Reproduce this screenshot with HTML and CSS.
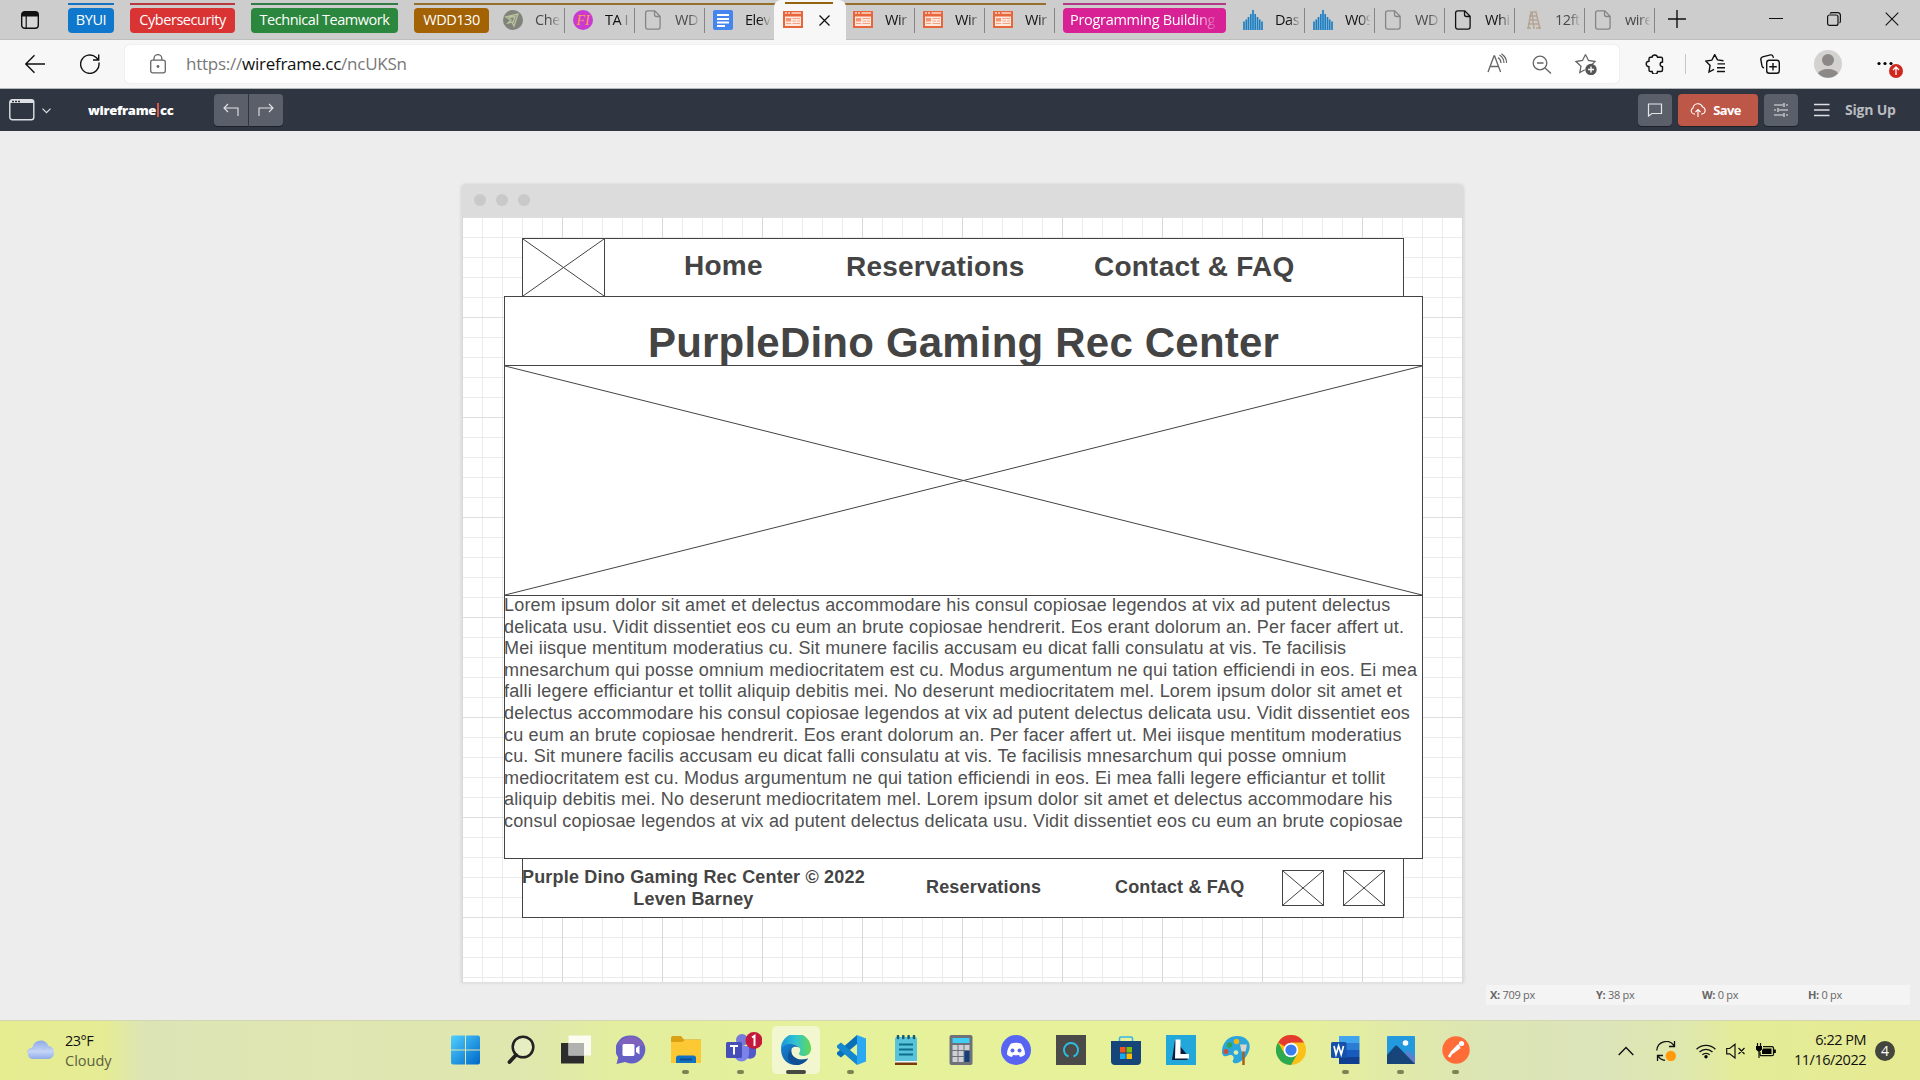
FILE: index.html
```html
<!DOCTYPE html>
<html lang="en">
<head>
<meta charset="utf-8">
<title>wireframe.cc</title>
<link rel="stylesheet" href="styles.css">
</head>
<body>
<svg class="defs" width="0" height="0">
  <symbol id="i-page" viewBox="0 0 20 20"><path d="M4.6 .9h7.2l5.3 5.3v10.900a2 2 0 0 1-2 2H4.600a2 2 0 0 1-2-2V2.900a2 2 0 0 1 2-2zM11.500 1v3.500a2 2 0 0 0 2 2H17" fill="none" stroke="currentColor" stroke-width="1.300"/></symbol>
  <symbol id="i-wire" viewBox="0 0 20 20"><path d="M0 1h20v17H0z" fill="#e8663c"/><path d="M2 6.500h16V16H2z" fill="#ffe9df"/><path d="M2 3h2M5 3h2M8.500 3H18" stroke="#ffd9ca" stroke-width="1.500"/><path d="M3 8h5v3.500H3z" fill="#f59573"/><path d="M9.500 8.500H17M9.500 11H13M14 11h3M3 13.500h5M9.500 13.500H17" stroke="#f2a386" stroke-width="1.200"/></symbol>
  <symbol id="i-bars" viewBox="0 0 20 20"><path d="M1 20v-8.500M3.300 20v-10.500M5.500 20V7M7.800 20V4M10 20V0M12.200 20V4M14.500 20V7M16.700 20V9.500M19 20v-8.500" stroke="#1b7fc4" stroke-width="1.700"/></symbol>
</svg>

<div class="tabstrip">
  <svg class="tab-menu" viewBox="0 0 18 18"><rect x=".7" y=".7" width="16.600" height="16.600" rx="3" fill="#d8d8d8" stroke="#111" stroke-width="1.400"/><path d="M1 1h16v4.500H1z" fill="#111"/><path d="M5.200 5v12" stroke="#111" stroke-width="1.200"/></svg>
  <div class="group blue"><span class="chip">BYUI</span></div>
  <div class="group red"><span class="chip">Cybersecurity</span></div>
  <div class="group green"><span class="chip">Technical Teamwork</span></div>
  <div class="group brown">
    <span class="chip">WDD130</span>
    <div class="tab dim"><svg class="fav" viewBox="0 0 20 20"><circle cx="10" cy="10" r="10" fill="#7f837c"/><path d="M3 7l12-3-4 12-2-4-4 1 3-3zM6 7.500l6-1-2 6" fill="none" stroke="#bac29c" stroke-width="1.300"/></svg><span>Che</span></div>
    <div class="tab"><svg class="fav" viewBox="0 0 20 20"><circle cx="10" cy="10" r="10" fill="#c93ad2"/><text x="10" y="15" class="fi" text-anchor="middle">FI</text></svg><span>TA I</span></div>
    <div class="tab dim"><svg class="fav"><use href="#i-page"/></svg><span>WD</span></div>
    <div class="tab noline"><svg class="fav" viewBox="0 0 20 20"><rect width="20" height="20" rx="2" fill="#4485ee"/><path d="M4 5h12M4 9h12M4 12.500h12M4 16h8" stroke="#fff" stroke-width="2"/></svg><span>Elev</span></div>
    <div class="tab active"><svg class="fav"><use href="#i-wire"/></svg><svg class="close" viewBox="0 0 11 11"><path d="M.5.5l10 10M10.500.5l-10 10" stroke="#111" stroke-width="1.300"/></svg></div>
    <div class="tab"><svg class="fav"><use href="#i-wire"/></svg><span>Wir</span></div>
    <div class="tab"><svg class="fav"><use href="#i-wire"/></svg><span>Wir</span></div>
    <div class="tab"><svg class="fav"><use href="#i-wire"/></svg><span>Wir</span></div>
  </div>
  <div class="group pink"><span class="chip"><span class="chip-fade">Programming Building</span></span></div>
  <div class="tabs">
    <div class="tab"><svg class="fav"><use href="#i-bars"/></svg><span>Das</span></div>
    <div class="tab"><svg class="fav"><use href="#i-bars"/></svg><span>W09</span></div>
    <div class="tab dim"><svg class="fav"><use href="#i-page"/></svg><span>WD</span></div>
    <div class="tab"><svg class="fav"><use href="#i-page"/></svg><span>Whi</span></div>
    <div class="tab dim"><svg class="fav" viewBox="0 0 20 20"><path d="M5 19L8 2h5l4 17M9 2l2 17M6 6h8M6 10h9M5 14h11M4 18h4M13 18h5" fill="none" stroke="#b6a494" stroke-width="1.500"/></svg><span>12ft</span></div>
    <div class="tab dim"><svg class="fav"><use href="#i-page"/></svg><span>wire</span></div>
  </div>
  <svg class="new-tab" viewBox="0 0 18 18"><path d="M9 0v18M0 9h18" stroke="#111" stroke-width="1.400"/></svg>
  <div class="window-buttons">
    <svg viewBox="0 0 14 14"><path d="M0 6.500h14" stroke="#111"/></svg>
    <svg viewBox="0 0 14 14"><rect x=".6" y="3" width="10.400" height="10.400" rx="2" fill="none" stroke="#111" stroke-width="1.200"/><path d="M3 1.500Q3.500.6 5 .6h5.500a2.900 2.900 0 0 1 2.900 2.900V9q0 1.500-.9 2" fill="none" stroke="#111" stroke-width="1.200"/></svg>
    <svg viewBox="0 0 14 14"><path d="M.7.700l12.600 12.600M13.300.7L.7 13.300" stroke="#111" stroke-width="1.100"/></svg>
  </div>
</div>

<div class="toolbar">
  <svg class="back" viewBox="0 0 20 20"><path d="M20 10H1M9.500 1.200L.8 10l8.700 8.800" fill="none" stroke="#111" stroke-width="1.400"/></svg>
  <svg class="reload" viewBox="0 0 20 20"><path d="M18.900 8.500a9.200 9.200 0 1 1-2.700-5l2.500 2.500M18.700.5V6H13" fill="none" stroke="#111" stroke-width="1.400"/></svg>
  <div class="address">
    <svg class="lock" viewBox="0 0 16 20"><rect x=".7" y="6.200" width="14.600" height="12.600" rx="2" fill="none" stroke="#666" stroke-width="1.300"/><path d="M4 6V4.500a3.900 3.900 0 0 1 7.800 0V6" fill="none" stroke="#666" stroke-width="1.300"/><circle cx="8" cy="12.500" r="1.400" fill="#666"/></svg>
    <div class="url">https://<b>wireframe.cc</b>/ncUKSn</div>
    <svg class="tool" viewBox="0 0 22 22"><path d="M2 19L8 3h.6l6 16M4.200 13.500h8.200" fill="none" stroke="#666" stroke-width="1.300"/><path d="M12 4.500q3 2 3 5.500M13.500 2q4.500 3 4.500 8M15.500.8Q21 5 20.500 10" fill="none" stroke="#666" stroke-width="1.200"/></svg>
    <svg class="tool" viewBox="0 0 22 22"><circle cx="10" cy="10" r="6.800" fill="none" stroke="#666" stroke-width="1.300"/><path d="M15 15l6 5.500M7 10h6.500" stroke="#666" stroke-width="1.400"/></svg>
    <svg class="tool" viewBox="0 0 22 22"><path d="M10.500 1.500l3 6 6.500 1-3 3M10.500 1.500l-3 6-6.500 1 5 4.700-1.200 6.300 5-2.800" fill="none" stroke="#666" stroke-width="1.300"/><circle cx="16" cy="16.500" r="5.700" fill="#555"/><path d="M16 13.500v6M13 16.500h6" stroke="#fff" stroke-width="1.400"/></svg>
  </div>
  <svg class="ext" viewBox="0 0 20 20"><path d="M7 3.200a2.800 2.800 0 0 1 5.500 0h3.500q1.500 0 1.500 1.500V8a2.300 2.300 0 0 0 0 4.700V16q0 1.500-1.500 1.500h-3.500a2.600 2.600 0 0 1-5.300 0H5.500q-1.500 0-1.500-1.500v-3.200a2.800 2.800 0 0 1 0-5.600V4.700q0-1.500 1.500-1.500z" fill="none" stroke="#111" stroke-width="1.400"/></svg>
  <i class="divider"></i>
  <svg class="favs" viewBox="0 0 20 20"><path d="M18.500 7l-6-.8L9.700.9 6.800 6.500.8 7.400l4.300 4.300-1.100 6.600 5-2.700M12.500 10.200H20M12 14h8M12 17.800h8" transform="translate(0 -.3)" fill="none" stroke="#111" stroke-width="1.400"/></svg>
  <svg class="coll" viewBox="0 0 20 20"><rect x="6.700" y="6.200" width="12.600" height="13" rx="2.500" fill="none" stroke="#111" stroke-width="1.400"/><path d="M13 9v7.500M9.300 12.800h7.500" stroke="#111" stroke-width="1.400"/><path d="M4 14q-1.500-.5-2-2L.8 5.500Q.6 3.500 2.500 2.800L10.500.9q2-.3 2.500 1.500l.5 1.500" fill="none" stroke="#111" stroke-width="1.400"/></svg>
  <svg class="avatar" viewBox="0 0 28 28"><circle cx="14" cy="14" r="14" fill="#d4d2d0"/><circle cx="14" cy="10" r="6" fill="#8b8886"/><path d="M4 23.500a10.500 6.500 0 0 1 20 0 14 14 0 0 1-20 0z" fill="#8b8886"/></svg>
  <svg class="more" viewBox="0 0 26 28"><circle cx="2" cy="13.500" r="1.600"/><circle cx="8" cy="13.500" r="1.600"/><circle cx="14" cy="13.500" r="1.600"/><circle cx="19" cy="21" r="7" fill="#d0281f"/><path d="M19 25v-7.500M16 20l3-3 3 3" fill="none" stroke="#fff" stroke-width="1.300"/></svg>
</div>

<div class="appbar">
  <svg class="stencil" viewBox="0 0 26 22"><rect x=".8" y=".8" width="24" height="20" rx="2.500" fill="none" stroke="#dfe0e3" stroke-width="1.400"/><path d="M1 1h23.500v3H1z" fill="#dfe0e3"/><path d="M3 2.500h2M6 2.500h2M9 2.500h2" stroke="#2f3541" stroke-width="1.500"/></svg>
  <svg class="chev" viewBox="0 0 9 6"><path d="M.5.7l4 4 4-4" fill="none" stroke="#dfe0e3" stroke-width="1.200"/></svg>
  <div class="logo">wireframe<i></i>cc</div>
  <div class="history">
    <div class="btn"><svg viewBox="0 0 16 14"><path d="M15 13V5H1M5 1L1 5l4 4" fill="none" stroke="#e4e5e8" stroke-width="1.100"/></svg></div>
    <div class="btn"><svg viewBox="0 0 16 14"><path d="M1 13V5h14M11 1l4 4-4 4" fill="none" stroke="#e4e5e8" stroke-width="1.100"/></svg></div>
  </div>
  <div class="actions">
    <div class="btn round"><svg viewBox="0 0 16 14"><path d="M1.500 1h13v9.500H5L1.500 13z" fill="none" stroke="#e4e5e8" stroke-width="1.200"/></svg></div>
    <div class="btn save"><svg viewBox="0 0 16 14"><path d="M5 11H3.800A3.200 3.200 0 0 1 3 5 5 5 0 0 1 12.600 4 3.600 3.600 0 0 1 12 11h-1M8 14V6.500M5.500 9L8 6.500 10.500 9" fill="none" stroke="#fff" stroke-width="1.100"/></svg>Save</div>
    <div class="btn round"><svg viewBox="0 0 16 14"><path d="M1 2h9M13 2h2M1 7h2M6 7h9M1 12h9M13 12h2M11 0v4M5 5v4M11 10v4" fill="none" stroke="#e4e5e8" stroke-width="1.200"/></svg></div>
    <svg class="burger" viewBox="0 0 16 14"><path d="M0 1.500h15.500M0 7h15.500M0 12.500h15.500" stroke="#dfe0e3" stroke-width="1.300"/></svg>
    <span class="signup">Sign Up</span>
  </div>
</div>

<div class="workspace">
  <div class="frame">
    <div class="frame-bar"><i></i><i></i><i></i></div>
    <div class="grid">
      <div class="box w-nav"></div>
      <svg class="ph w-logo"><line x1="0" y1="0" x2="100%" y2="100%"/><line x1="100%" y1="0" x2="0" y2="100%"/></svg>
      <div class="label w-home">Home</div>
      <div class="label w-res">Reservations</div>
      <div class="label w-faq">Contact &amp; FAQ</div>
      <div class="box w-foot"></div>
      <div class="box w-main"></div>
      <div class="w-title">PurpleDino Gaming Rec Center</div>
      <svg class="ph w-hero"><line x1="0" y1="0" x2="100%" y2="100%"/><line x1="100%" y1="0" x2="0" y2="100%"/></svg>
      <div class="w-text">Lorem ipsum dolor sit amet et delectus accommodare his consul copiosae legendos at vix ad putent delectus<br>delicata usu. Vidit dissentiet eos cu eum an brute copiosae hendrerit. Eos erant dolorum an. Per facer affert ut.<br>Mei iisque mentitum moderatius cu. Sit munere facilis accusam eu dicat falli consulatu at vis. Te facilisis<br>mnesarchum qui posse omnium mediocritatem est cu. Modus argumentum ne qui tation efficiendi in eos. Ei mea<br>falli legere efficiantur et tollit aliquip debitis mei. No deserunt mediocritatem mel. Lorem ipsum dolor sit amet et<br>delectus accommodare his consul copiosae legendos at vix ad putent delectus delicata usu. Vidit dissentiet eos<br>cu eum an brute copiosae hendrerit. Eos erant dolorum an. Per facer affert ut. Mei iisque mentitum moderatius<br>cu. Sit munere facilis accusam eu dicat falli consulatu at vis. Te facilisis mnesarchum qui posse omnium<br>mediocritatem est cu. Modus argumentum ne qui tation efficiendi in eos. Ei mea falli legere efficiantur et tollit<br>aliquip debitis mei. No deserunt mediocritatem mel. Lorem ipsum dolor sit amet et delectus accommodare his<br>consul copiosae legendos at vix ad putent delectus delicata usu. Vidit dissentiet eos cu eum an brute copiosae</div>
      <div class="small w-copy">Purple Dino Gaming Rec Center © 2022<br>Leven Barney</div>
      <div class="small w-fres">Reservations</div>
      <div class="small w-ffaq">Contact &amp; FAQ</div>
      <svg class="ph w-s1"><line x1="0" y1="0" x2="100%" y2="100%"/><line x1="100%" y1="0" x2="0" y2="100%"/></svg>
      <svg class="ph w-s2"><line x1="0" y1="0" x2="100%" y2="100%"/><line x1="100%" y1="0" x2="0" y2="100%"/></svg>
    </div>
  </div>
  <div class="coords"><span><b>X:</b> 709 px</span><span><b>Y:</b> 38 px</span><span><b>W:</b> 0 px</span><span><b>H:</b> 0 px</span></div>
</div>

<div class="taskbar">
  <div class="weather">
    <svg viewBox="0 0 30 20"><defs><linearGradient id="cl" x2="0" y2="1"><stop offset="0" stop-color="#8ea9e8"/><stop offset=".6" stop-color="#c5d5f6"/><stop offset="1" stop-color="#8fabea"/></linearGradient></defs><path d="M6 19a6 6 0 0 1 0-11.500Q8.500.5 14.500.5T22.500 6A6.700 6.700 0 0 1 23.500 19z" fill="url(#cl)"/><path d="M1 12q3-5 8-3M17 9q3-3.500 8-2" fill="none" stroke="#aabff0"/></svg>
    <div><span>23°F</span><small>Cloudy</small></div>
  </div>
  <div class="apps">
    <div class="app"><svg viewBox="0 0 30 30"><defs><linearGradient id="wn" x2="1" y2="1"><stop offset="0" stop-color="#4fd0ff"/><stop offset="1" stop-color="#0067c8"/></linearGradient></defs><path d="M2 .5h12v14H0V2.500a2 2 0 0 1 2-2zM15 .5h12a2 2 0 0 1 2 2v12H15zM0 15.500h14v14H2a2 2 0 0 1-2-2zM15 15.500h14v12a2 2 0 0 1-2 2H15z" fill="url(#wn)"/></svg></div>
    <div class="app"><svg viewBox="0 0 30 30"><circle cx="17" cy="12" r="10.300" fill="#fff" fill-opacity=".25" stroke="#222" stroke-width="2.500"/><path d="M10 20l-6.500 7" stroke="#222" stroke-width="3.800" stroke-linecap="round"/></svg></div>
    <div class="app"><svg viewBox="0 0 30 30"><path d="M0 8h23v20.500H0z" fill="#2c2c2c"/><path d="M7.500 .5H30v20H7.500z" fill="#fff" opacity=".85"/><path d="M7.500 8H23v12.500H7.500z" fill="#b0b2b0"/></svg></div>
    <div class="app"><svg viewBox="0 0 30 30"><path d="M15 .5a14 14 0 1 1-6 26.500L.5 29l1.700-6.500A14 14 0 0 1 15 .5z" fill="#6460c4"/><path d="M2 10A14 14 0 0 1 28 11z" fill="#7f62bd"/><rect x="6.500" y="9" width="12" height="12" rx="1.500" fill="#fff"/><path d="M20 13l3.500-2.500v9L20 17z" fill="#fff"/></svg></div>
    <div class="app"><svg viewBox="0 0 30 30"><path d="M0 3a2 2 0 0 1 2-2h8l3 3.500h17V28H0z" fill="#dba114"/><path d="M0 7h11l3-2h16v23H0z" fill="#fcc934"/><path d="M5 28v-5q0-2.500 2.500-2.500h15q2.500 0 2.500 2.500v5z" fill="#1272c2"/><path d="M9 24.500h12" stroke="#0b4e94" stroke-width="2"/></svg><i class="dot"></i></div>
    <div class="app"><svg class="wide" viewBox="0 0 36 32"><circle cx="16" cy="8" r="6" fill="#777bd8"/><path d="M22 13h8v8a6 6 0 0 1-9 5z" fill="#5059c9"/><path d="M8 14h15v8a7.500 7.500 0 0 1-15 0z" fill="#7b83eb"/><rect y="10" width="16" height="16" rx="1.500" fill="#464eb8"/><path d="M4 14h8M8 14v8.500" stroke="#fff" stroke-width="2"/><circle cx="28" cy="8.500" r="8.500" fill="#c4183c"/><path d="M26 5.500l2.500-1.700V14" fill="none" stroke="#fff" stroke-width="2"/></svg><i class="dot"></i></div>
    <div class="app current"><svg viewBox="0 0 30 30"><defs><linearGradient id="e1" x2="1"><stop offset="0" stop-color="#1b96dc"/><stop offset=".5" stop-color="#30c4d2"/><stop offset="1" stop-color="#62d94e"/></linearGradient><linearGradient id="e2" x2="1" y2="1"><stop offset="0" stop-color="#1685d4"/><stop offset="1" stop-color="#0c4b92"/></linearGradient></defs><path d="M0 14A15 15 0 0 1 30 13c.3 5-3 8-7.500 8-4 0-6-1.500-4-4.500 1-5-2.500-7-7-7S2 11 0 14z" fill="url(#e1)"/><path d="M0 14C2 8 15 7 18.500 13c-6-3-8.500 0-8.500 4 0 6 8 10 17 6.500C20 34 0 32 0 14z" fill="url(#e2)"/><path d="M10.500 14C9 21 17 27 27 23.500 22 31.500 12 32 8 25.500 6 21 7.500 16.500 10.500 14z" fill="#0f4f96"/><path d="M18.500 13c1.500 2 .5 3.500-.3 5-.7 2 1.500 3.500 5 3.800-5 2-11.500 0-12-4.800 0-4 3.500-6.500 7.300-4z" fill="#f1f6cf"/></svg><i class="dot"></i></div>
    <div class="app"><svg viewBox="0 0 30 30"><path d="M21 0l9 3.500v23L21 30z" fill="#2aa9f2"/><path d="M21 0v9L5 22.500 1 19.500v-2z" fill="#0a6fb9"/><path d="M21 30v-9L5 7.500 1 10.500v2z" fill="#1487cf"/></svg><i class="dot"></i></div>
    <div class="app"><svg viewBox="0 0 30 30"><path d="M4 27h22v3H4z" fill="#7b3b0b"/><path d="M4 26h22v1.500H4z" fill="#f6f6f6"/><path d="M6 2h18a2 2 0 0 1 2 2v22H4V4a2 2 0 0 1 2-2z" fill="#5ac3dc"/><path d="M7 1v2M12.300 1v2M17.600 1v2M23 1v2" stroke="#135b70" stroke-width="2.500" stroke-linecap="round"/><path d="M8 9.500h14M8 14.500h14M8 19.500h14" stroke="#0d6e8c" stroke-width="2"/></svg></div>
    <div class="app"><svg viewBox="0 0 30 30"><rect x="3.500" width="23" height="30" rx="2" fill="#6e7278"/><path d="M6.500 3h17v5h-17z" fill="#41cdf4"/><path d="M6.500 10h5v5h-5zM12.500 10h5v5h-5zM18.500 10h5v5h-5zM6.500 16h5v5h-5zM12.500 16h5v5h-5zM6.500 22h5v5h-5zM12.500 22h5v5h-5z" fill="#cdd1d6"/><path d="M18.500 16h5v11h-5z" fill="#163c7c"/></svg></div>
    <div class="app"><svg viewBox="0 0 30 30"><circle cx="15" cy="15" r="15" fill="#5865f2"/><path d="M10 8.500q5-1.500 10 0 4 5 4 11-2 2-5 2.500l-1-2q-3 .6-6 0l-1 2q-3-.5-5-2.500 0-6 4-11z" fill="#fff"/><circle cx="11.500" cy="15.500" r="2" fill="#5865f2"/><circle cx="18.500" cy="15.500" r="2" fill="#5865f2"/></svg></div>
    <div class="app"><svg viewBox="0 0 30 30"><path d="M0 0h30v30H0z" fill="#4a4a48"/><path d="M12.500 21.500a7 7 0 1 1 5 0" fill="none" stroke="#2cbbe0" stroke-width="1.900"/></svg></div>
    <div class="app"><svg viewBox="0 0 30 30"><path d="M8.500 6V3.500Q8.500 2 10 2h10q1.500 0 1.500 1.500V6" fill="none" stroke="#38b6e2" stroke-width="1.600"/><path d="M0 6h30v20a4 4 0 0 1-4 4H4a4 4 0 0 1-4-4z" fill="#154579"/><path d="M9 12h5.500v5.500H9z" fill="#f35325"/><path d="M15.500 12H21v5.500h-5.500z" fill="#81bc06"/><path d="M9 18.500h5.500V24H9z" fill="#18aaf0"/><path d="M15.500 18.500H21V24h-5.500z" fill="#ffba08"/></svg></div>
    <div class="app"><svg viewBox="0 0 30 30"><path d="M0 0h30v30H0z" fill="#22a7da"/><path d="M9 5L6 25h15l2-3z" fill="#0b1d3a"/><path d="M9.500 4.500h5v14.500H23v4.500H9z" fill="#fff"/></svg></div>
    <div class="app"><svg viewBox="0 0 30 30"><path d="M16 1C25 1 30 7 28.500 14c-2 8-7 12-12 14-4 1-6-1-4-4 1-3-2-5-5-3.500-4 2-7 0-6.500-5C1.500 7 8 1 16 1z" fill="#2ba6dc"/><circle cx="15.500" cy="6.500" r="2.700" fill="#efb60c"/><circle cx="8.500" cy="10" r="2.700" fill="#31a24c"/><circle cx="5" cy="16.500" r="2.500" fill="#cf4c37"/><circle cx="15" cy="17.500" r="2.300" fill="#ddeea9"/><path d="M22.500 13v17" stroke="#a9601f" stroke-width="2.500"/><path d="M19 9.500h7l-1.500 7h-4z" fill="#dcd4c4"/></svg></div>
    <div class="app"><svg viewBox="0 0 30 30"><circle cx="15" cy="15" r="15" fill="#fbc116"/><path d="M15 15L2 7.500A15 15 0 0 1 28 7.500H15z" fill="#e33b2e"/><path d="M2 7.500A15 15 0 0 0 15 30l6.500-11.500L8.500 18.500z" fill="#2da94f"/><circle cx="15" cy="15" r="7.300" fill="#fff"/><circle cx="15" cy="15" r="5.600" fill="#3b7ded"/></svg></div>
    <div class="app"><svg viewBox="0 0 30 30"><path d="M8 1h20.500v7H8z" fill="#41a5ee"/><path d="M8 8h20.500v7H8z" fill="#2b7cd3"/><path d="M8 15h20.500v7H8z" fill="#185abd"/><path d="M8 22h20.500v7H8z" fill="#103f91"/><rect y="7" width="15.500" height="16" rx="1.500" fill="#1551aa"/><path d="M3 11l2 8.500 2.600-8.500 2.600 8.500 2.300-8.500" fill="none" stroke="#fff" stroke-width="1.700"/></svg><i class="dot"></i></div>
    <div class="app"><svg viewBox="0 0 30 30"><rect x="1" y="1" width="28" height="28" rx="1" fill="#2399de"/><path d="M14 29l7-13q1-1 2 0l6 7v6z" fill="#5c7fd0"/><path d="M1 20L9 11q1.200-1 2.400 0L29 29H1z" fill="#174579"/><circle cx="19.500" cy="8" r="2.800" fill="#fff"/></svg><i class="dot"></i></div>
    <div class="app"><svg viewBox="0 0 30 30"><circle cx="15" cy="15" r="13.700" fill="#ff6c37"/><path d="M8 22l3-5 7-7" fill="none" stroke="#fff" stroke-width="2.500"/><circle cx="20.500" cy="8.500" r="2.600" fill="#fff"/><path d="M11 18l8-6" stroke="#fff" stroke-width="2.200"/></svg><i class="dot"></i></div>
  </div>
  <div class="tray">
    <svg class="up" viewBox="0 0 16 10"><path d="M.7 9L8 1.500 15.300 9" fill="none" stroke="#111" stroke-width="1.400"/></svg>
    <svg class="sync" viewBox="0 0 20 20"><path d="M.8 9.500A9.500 9.500 0 0 1 18 4.500M18.500 0v5.500H13M9 19.300a9.500 9.500 0 0 1-7-4.500M1.500 20v-5.500H7" fill="none" stroke="#111" stroke-width="1.300"/><circle cx="14.800" cy="15" r="5.200" fill="#ff9a0c"/></svg>
    <svg class="wifi" viewBox="0 0 20 16"><path d="M.6 6.200a13.300 13.300 0 0 1 18.800 0M3.500 9a9.200 9.200 0 0 1 13 0M6.300 11.800a5.300 5.300 0 0 1 7.400 0" fill="none" stroke="#111" stroke-width="1.300"/><circle cx="10" cy="13.800" r="1.700"/></svg>
    <svg class="mute" viewBox="0 0 20 16"><path d="M.7 5.500v5.300h3L9 15V1.300L3.700 5.500zM12.500 5l6 6M18.500 5l-6 6" fill="none" stroke="#111" stroke-width="1.200"/></svg>
    <svg class="batt" viewBox="0 0 20 16"><path d="M7 3.700h9q1.500 0 1.500 1.500v6q0 1.500-1.500 1.500H5.500q-1.500 0-1.500-1.500V9" fill="none" stroke="#111" stroke-width="1.300"/><path d="M7 5.500h8.500V11H6V7.500zM18 6.500h1.800v3.500H18zM0 3h6v3.500L4 8.500H2L0 6.500z"/><path d="M1.500 0v3M4.500 0v3M3 8v7" stroke="#111" stroke-width="1.200"/></svg>
    <div class="clock"><span>6:22 PM</span><span>11/16/2022</span></div>
    <div class="count">4</div>
  </div>
</div>
</body>
</html>
```

FILE: styles.css
```css
* { box-sizing: border-box; }

body {
  margin: 0;
  width: 1920px;
  height: 1080px;
  overflow: hidden;
  display: flex;
  flex-direction: column;
  font-family: "Open Sans", "Noto Sans", sans-serif;
  color: #111;
}

svg { display: block; flex: none; }
.defs { display: none; }

/* Tab strip */
.tabstrip {
  height: 40px;
  flex: none;
  display: flex;
  align-items: flex-start;
  background: #cdcdcd;
  border-bottom: 1px solid #bdbdbd;
  font-size: 14.5px;
  letter-spacing: -0.45px;
}
.tab-menu { width: 18px; height: 18px; margin: 11px 29px 0 21px; }
.group {
  position: relative;
  display: flex;
  height: 40px;
  padding-top: 8px;
  margin-right: 16px;
}
.group::before {
  content: "";
  position: absolute;
  left: 0;
  right: 0;
  top: 3px;
  height: 2px;
  background: var(--c);
}
.blue { --c: #1673bf; --chip: #0f78cc; }
.red { --c: #b8393f; --chip: #d93334; }
.green { --c: #347c45; --chip: #2b873d; }
.brown { --c: #94702d; --chip: #a36204; }
.pink { --c: #b13a86; --chip: #d92196; }
.chip {
  display: flex;
  justify-content: center;
  height: 25px;
  line-height: 23px;
  border-radius: 4px;
  background: var(--chip);
  color: #fff;
  white-space: nowrap;
}
.blue .chip { width: 46px; }
.red .chip { width: 105px; }
.green .chip { width: 147px; }
.brown .chip { width: 75px; margin-right: 6px; }
.pink .chip { width: 163px; }
.chip-fade {
  width: 149px;
  overflow: hidden;
  letter-spacing: -0.3px;
  -webkit-mask-image: linear-gradient(90deg, #000 125px, transparent 149px);
  mask-image: linear-gradient(90deg, #000 125px, transparent 149px);
}
.brown { margin-right: 8px; }
.brown::before { right: 9px; }
.pink { margin-right: 9px; }
.tabs { display: flex; padding-top: 8px; }
.tab {
  width: 70px;
  height: 25px;
  display: flex;
  align-items: flex-start;
  padding-left: 8px;
  border-right: 1px solid #858585;
}
.tab .fav { width: 20px; height: 20px; margin: 2px 12px 0 0; }
.tab span {
  width: 25px;
  line-height: 23px;
  overflow: hidden;
  white-space: nowrap;
  -webkit-mask-image: linear-gradient(90deg, #000 14px, transparent 26px);
  mask-image: linear-gradient(90deg, #000 14px, transparent 26px);
}
.tab.dim { color: #4a4a4a; }
.tab.dim .fav { color: #858585; }
.tab.noline { border-color: transparent; }
.fi { font: italic 14px "Liberation Serif", serif; fill: #ffa04a; letter-spacing: 0; }
.tab.active {
  position: relative;
  width: 72px;
  height: 40px;
  margin: -8px -1px 0;
  padding: 8px 0 0 9px;
  background: #f7f7f7;
  border: 0;
  border-radius: 7px 7px 0 0;
}
.tab.active::before {
  content: "";
  position: absolute;
  left: 11px;
  top: 2px;
  width: 48px;
  height: 2px;
  background: #94630f;
}
.tab .close { width: 11px; height: 11px; margin: 7px 0 0 4px; }
.new-tab { width: 18px; height: 18px; margin: 10px 0 0 13px; }
.window-buttons { display: flex; gap: 44px; margin: 12px 0 0 83px; }
.window-buttons svg { width: 14px; height: 14px; }

/* Browser toolbar */
.toolbar {
  height: 49px;
  flex: none;
  display: flex;
  align-items: center;
  padding: 0 0 1px 25px;
  background: #f7f7f7;
  border-bottom: 1px solid #b5b8bb;
}
.back { width: 20px; height: 20px; }
.reload { width: 20px; height: 20px; margin: 0 25px 0 35px; }
.address {
  width: 1494px;
  height: 38px;
  display: flex;
  align-items: center;
  padding-left: 25px;
  background: #fff;
  border-radius: 5px;
  box-shadow: 0 0 2px #ddd;
}
.lock { width: 16px; height: 20px; margin-right: 20px; }
.url { width: 1308px; font-size: 17px; letter-spacing: -0.25px; color: #777; line-height: 24px; }
.url b { font-weight: 400; color: #111; }
.tool { width: 22px; height: 22px; margin-right: 22.500px; }
.ext { width: 20px; height: 20px; margin-left: 26px; }
.divider { width: 1px; height: 20px; margin: 0 19px 0 20px; background: #c6c6c6; }
.favs { width: 20px; height: 20px; }
.coll { width: 20px; height: 20px; margin: 0 34px 0 35px; }
.avatar { width: 28px; height: 28px; }
.more { width: 26px; height: 28px; margin-left: 35px; }

/* Editor bar */
.appbar {
  height: 42px;
  flex: none;
  display: flex;
  align-items: center;
  padding: 0 0 1px 9px;
  background: #2f3541;
}
.stencil { width: 26px; height: 22px; }
.chev { width: 9px; height: 6px; margin: 2px 37px 0 7px; }
.logo {
  width: 126px;
  display: flex;
  align-items: center;
  color: #fff;
  font-size: 13px;
  font-weight: 800;
  letter-spacing: -0.3px;
}
.logo i { width: 2px; height: 14px; margin: 0 1px; background: #d4574a; }
.history { display: flex; gap: 1px; }
.btn {
  width: 34px;
  height: 32px;
  display: flex;
  align-items: center;
  justify-content: center;
  background: #5a5f69;
  box-shadow: 0 1px 0 #1c2029;
}
.btn svg { width: 16px; height: 14px; }
.history .btn:first-child { border-radius: 4px 0 0 4px; }
.history .btn:last-child { border-radius: 0 4px 4px 0; }
.actions { display: flex; align-items: center; gap: 6px; margin-left: 1355px; }
.round { border-radius: 4px; }
.save {
  width: 80px;
  gap: 7px;
  padding-right: 5px;
  border-radius: 4px;
  background: #bd5748;
  color: #fff;
  font-size: 13px;
  font-weight: 700;
  letter-spacing: -0.6px;
}
.burger { width: 16px; height: 14px; margin: 0 9px 0 10px; }
.signup { font-size: 14px; font-weight: 700; letter-spacing: -0.2px; color: #b9bbc0; white-space: nowrap; }

/* Drawing area */
.workspace {
  position: relative;
  height: 889px;
  flex: none;
  padding: 53px 0 0 461px;
  background: #ededed;
}
.frame { width: 1003px; box-shadow: 0 0 3px #d2d2d2; border-radius: 5px 5px 0 0; }
.frame-bar {
  height: 33px;
  display: flex;
  align-items: center;
  gap: 10px;
  padding: 0 0 1px 13px;
  background: #dcdcdc;
  border-radius: 5px 5px 0 0;
}
.frame-bar i { width: 12px; height: 12px; border-radius: 50%; background: #c9c9c9; }
.grid {
  position: relative;
  height: 766px;
  border: solid #e0e0e0;
  border-width: 0 1px 1px;
  background-color: #fff;
  background-image:
    linear-gradient(90deg, #d8d8d8 1px, transparent 1px),
    linear-gradient(#dedede 1px, transparent 1px),
    linear-gradient(90deg, #ebebeb 1px, transparent 1px),
    linear-gradient(#ebebeb 1px, transparent 1px);
  background-size: 100px 100px, 100px 100px, 20px 20px, 20px 20px;
  font-family: "Liberation Sans", Arial, sans-serif;
  color: #444;
}
.grid > * { position: absolute; }
.box { background: #fff; border: 1px solid #444; }
.ph { background: #fff; border: 1px solid #444; }
.ph line { stroke: #444; stroke-width: 1; }
.w-nav { left: 60px; top: 21px; width: 882px; height: 59px; }
.w-logo { left: 60px; top: 21px; width: 83px; height: 59px; }
.w-main { left: 42px; top: 79px; width: 919px; height: 563px; }
.w-hero { left: 42px; top: 148px; width: 919px; height: 231px; }
.w-foot { left: 60px; top: 641px; width: 882px; height: 60px; }
.label { font-size: 28px; font-weight: 700; line-height: 34px; letter-spacing: 0.22px; white-space: nowrap; }
.w-home { left: 222px; top: 32px; }
.w-res { left: 384px; top: 33px; }
.w-faq { left: 632px; top: 33px; }
.w-title {
  left: 186px;
  top: 101px;
  font-size: 42px;
  font-weight: 700;
  line-height: 50px;
  letter-spacing: 0.2px;
  white-space: nowrap;
}
.w-text { left: 42px; top: 378px; font-size: 18px; line-height: 21.6px; white-space: nowrap; letter-spacing: 0.18px; color: #505050; }
.small { font-size: 18px; font-weight: 700; line-height: 22px; letter-spacing: 0.18px; white-space: nowrap; text-align: center; }
.w-copy { left: 60px; top: 649px; }
.w-fres { left: 464px; top: 659px; }
.w-ffaq { left: 653px; top: 659px; }
.w-s1 { left: 820px; top: 653px; width: 42px; height: 36px; }
.w-s2 { left: 881px; top: 653px; width: 42px; height: 36px; }

.coords {
  position: absolute;
  left: 1486px;
  top: 854px;
  width: 424px;
  height: 20px;
  padding-left: 4px;
  display: grid;
  grid-template-columns: repeat(4, 106px);
  line-height: 20px;
  font-size: 11px;
  letter-spacing: -0.3px;
  background: #f4f4f4;
  color: #666;
}

/* Taskbar */
.taskbar {
  height: 60px;
  flex: none;
  display: flex;
  align-items: center;
  border-top: 1px solid #d3d8b2;
  background: linear-gradient(90deg, #e6ec90 0, #e5ec94 105px, #dce4b6 145px, #dfe6b2 300px, #dfe7ae 520px, #e3ee9e 620px, #e6f29a 900px, #e6f09a 1300px, #dce5b4 1480px, #dce4ba 1600px, #dfe8ac 1690px, #e4ec98 1740px, #e6ea92 1920px);
}
.weather { width: 438px; display: flex; align-items: center; gap: 9px; padding-left: 26px; }
.weather svg { width: 30px; height: 20px; margin-top: -2px; }
.weather div { display: flex; flex-direction: column; line-height: 20px; font-size: 14.5px; letter-spacing: -0.5px; }
.weather small { font-size: 14.5px; letter-spacing: 0; color: #5c6042; }
.apps { display: flex; height: 59px; }
.app { width: 55px; position: relative; display: flex; justify-content: center; padding-top: 14px; }
.app svg { width: 30px; height: 30px; position: relative; }
.app svg.wide { width: 36px; height: 32px; margin: -3px 0 0 6px; }
.app .dot { position: absolute; left: 24px; top: 49px; width: 7px; height: 4px; border-radius: 2px; background: #7b8254; }
.current::before {
  content: "";
  position: absolute;
  left: 4px;
  top: 5px;
  width: 48px;
  height: 48px;
  border-radius: 5px;
  background: #f3f7cf;
}
.app.current .dot { left: 18px; width: 20px; background: #474a40; }
.tray { display: flex; align-items: center; margin-left: 135px; }
.up { width: 16px; height: 10px; }
.sync { width: 20px; height: 20px; margin: 0 20px 0 22px; }
.wifi, .mute, .batt { width: 20px; height: 16px; margin-right: 10px; }
.clock {
  width: 80px;
  margin-top: -2px;
  display: flex;
  flex-direction: column;
  align-items: flex-end;
  line-height: 20px;
  font-size: 14.5px;
  letter-spacing: -0.5px;
}
.count {
  width: 20px;
  height: 20px;
  margin-left: 9px;
  border-radius: 50%;
  background: #44453d;
  color: #fff;
  font-size: 14px;
  line-height: 20px;
  text-align: center;
}
```
